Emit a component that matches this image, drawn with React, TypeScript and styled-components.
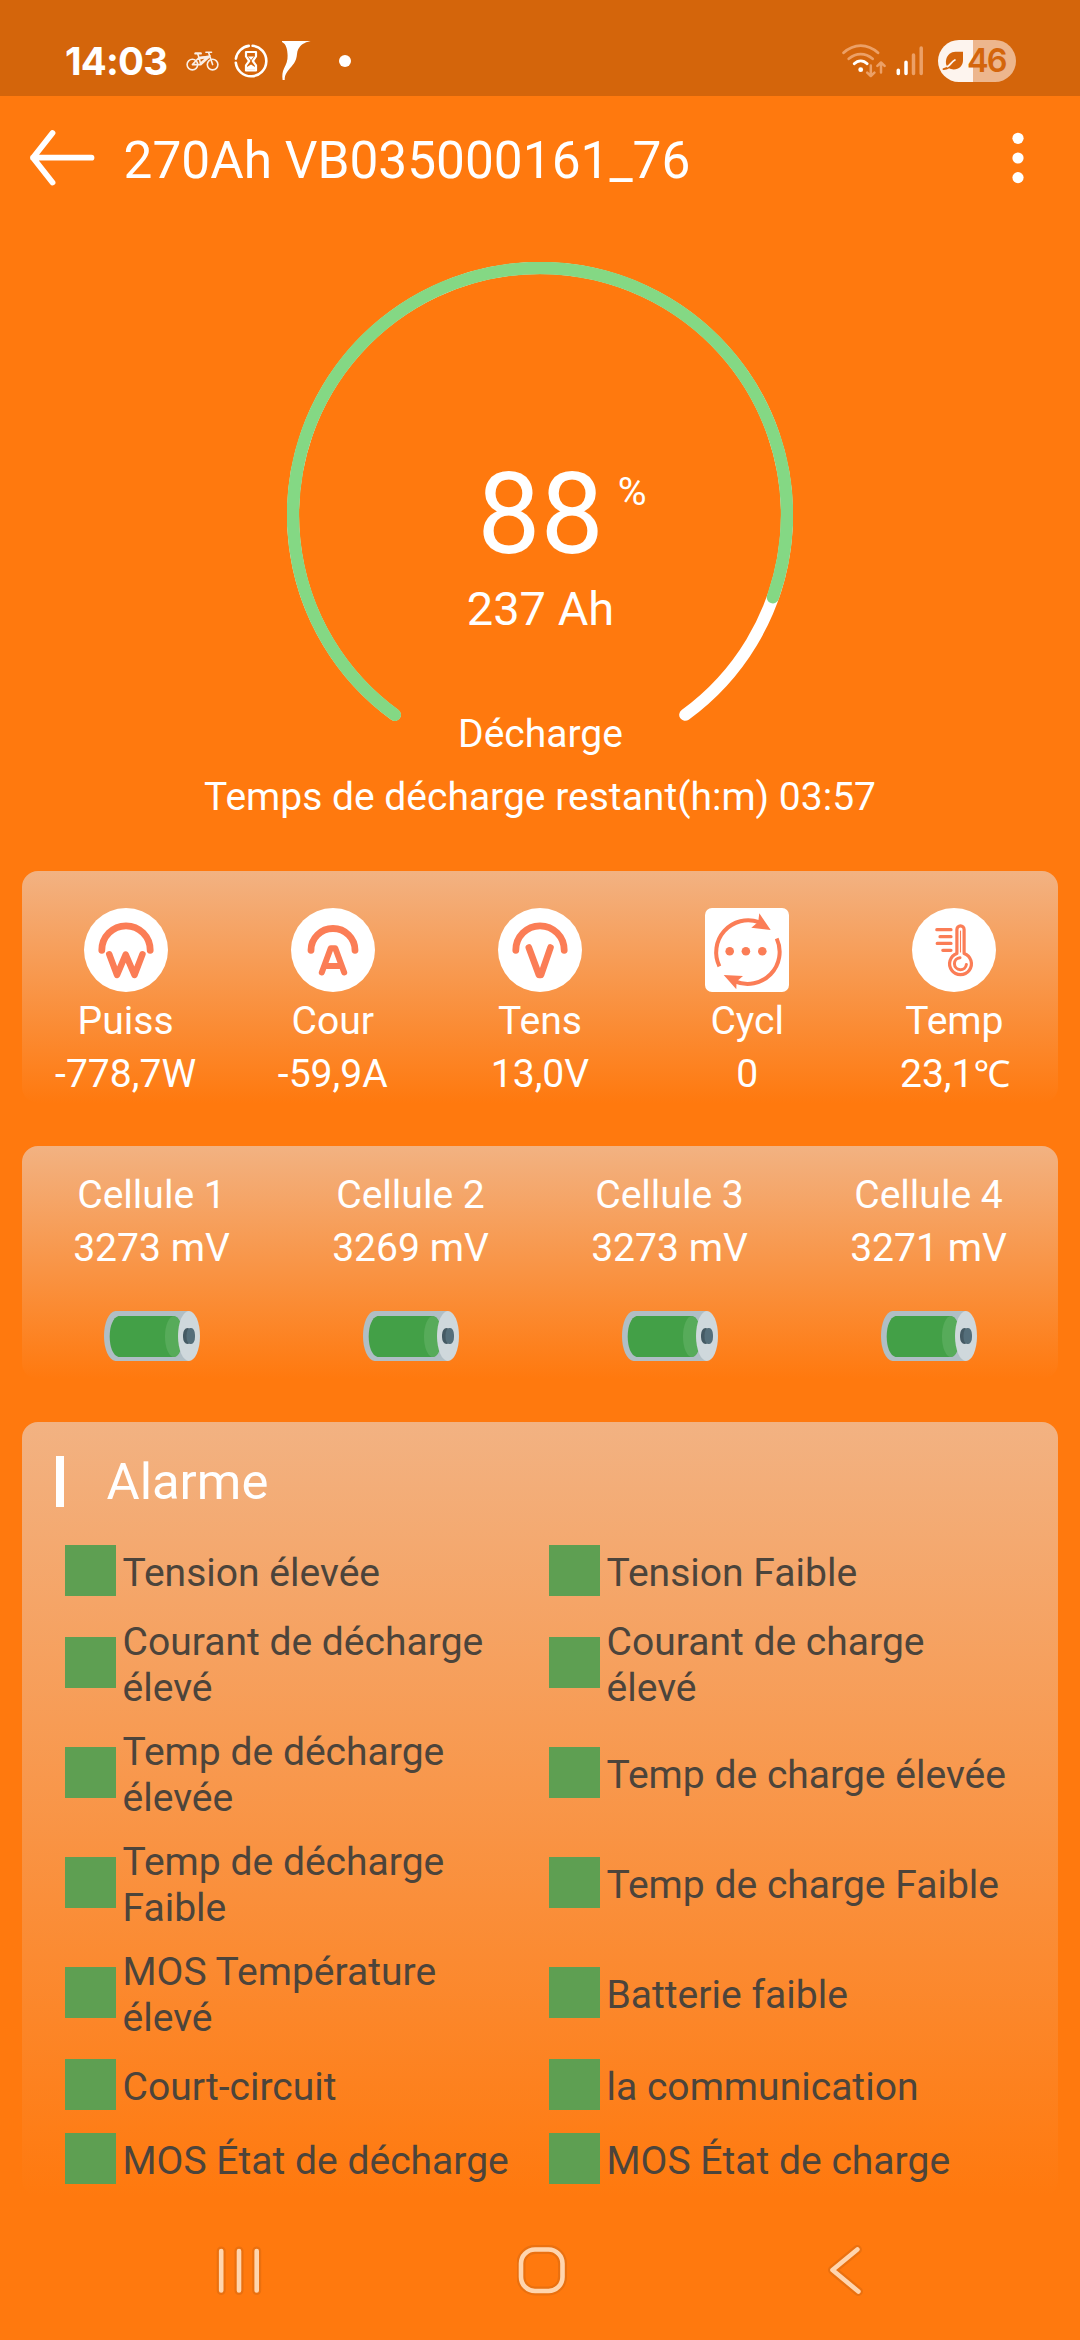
import React from "react";
import styled, { createGlobalStyle } from "styled-components";

const ORANGE = "#ff790e";
const CORAL = "#fb7d56";
const STATUS = "#d4650b";

const GlobalStyle = createGlobalStyle`
  * { box-sizing: border-box; }
  body {
    margin: 0;
    background: ${ORANGE};
    font-family: Roboto, "Noto Sans", sans-serif;
    color: #fff;
  }
  svg { display: block; flex: none; }
`;

const Screen = styled.main`
  width: 1080px;
  height: 2340px;
  display: flex;
  flex-direction: column;
  background: ${ORANGE};
  overflow: hidden;
`;

const StatusBar = styled.header`
  height: 96px;
  padding: 26px 64px 0 65px;
  display: flex;
  align-items: center;
  justify-content: space-between;
  background: ${STATUS};
`;

const StatusGroup = styled.div`
  display: flex;
  align-items: center;
`;

const Clock = styled.span`
  width: 121px;
  font: 700 38.5px/46px Inter, sans-serif;
  letter-spacing: -0.8px;
  white-space: nowrap;
`;

const BatteryPill = styled.div`
  width: 78px;
  height: 42px;
  margin-left: 14px;
  padding-left: 4px;
  border-radius: 21px;
  display: flex;
  align-items: center;
  background: linear-gradient(to right, #fdf4ee 35px, #edb68d 35px);
`;

const BatteryLevel = styled.span`
  margin-left: 3px;
  font: 600 32.5px/42px Inter, sans-serif;
  letter-spacing: -1.8px;
  color: ${STATUS};
`;

const Toolbar = styled.div`
  height: 124px;
  padding: 0 56px 0 28px;
  display: flex;
  align-items: center;
`;

const Title = styled.h1`
  flex: 1;
  margin: 0;
  padding: 5px 0 0 26.5px;
  font-size: 51.4px;
  font-weight: 400;
  line-height: 60px;
`;

const Gauge = styled.section`
  margin-top: 42px;
  height: 506px;
  display: grid;
  grid-template-columns: 506px;
  justify-content: center;
  & > * { grid-area: 1 / 1; }
`;

const Readout = styled.div`
  padding: 196.5px 0 0 1px;
  display: flex;
  flex-direction: column;
  align-items: center;
`;

const Percent = styled.div`
  position: relative;
  font-size: 112.5px;
  line-height: 112px;
`;

const PercentSign = styled.span`
  position: absolute;
  left: 100%;
  top: 10px;
  margin-left: 14px;
  font-size: 39.4px;
  line-height: 46px;
`;

const Capacity = styled.div`
  margin-top: 10px;
  font-size: 47px;
  line-height: 56px;
`;

const Mode = styled.div`
  margin-top: 74px;
  font-size: 39px;
  line-height: 46px;
`;

const Remaining = styled.p`
  margin: 5.5px 0 0;
  font-size: 39px;
  line-height: 46px;
  text-align: center;
`;

const Card = styled.section<{ $height: number; $top: number; $pad: number }>`
  height: ${(p) => p.$height}px;
  margin: ${(p) => p.$top}px 22px 0;
  padding-top: ${(p) => p.$pad}px;
  border-radius: 16px;
  background: linear-gradient(to bottom, #f2b282, ${ORANGE});
`;

const Columns = styled.div<{ $count: number }>`
  display: grid;
  grid-template-columns: repeat(${(p) => p.$count}, 1fr);
`;

const Column = styled.div`
  display: flex;
  flex-direction: column;
  align-items: center;
`;

const Label = styled.span`
  font-size: 39.1px;
  line-height: 53px;
  white-space: nowrap;
`;

const Degree = styled.span`
  font-size: 37px;
  letter-spacing: -1.5px;
`;

const IconBadge = styled.div<{ $square?: boolean }>`
  width: 84px;
  height: 84px;
  margin-bottom: 3.5px;
  border-radius: ${(p) => (p.$square ? "7px" : "50%")};
  background: #fff;
`;

const CellBattery = styled.div`
  margin-top: 36px;
  padding-left: 1px;
`;

const SectionTitle = styled.h2`
  margin: 0 0 26.5px 34px;
  height: 51px;
  display: flex;
  align-items: center;
  gap: 42.5px;
  font-size: 50.8px;
  font-weight: 400;
  line-height: 51px;
  &::before {
    content: "";
    width: 8px;
    height: 51px;
    background: #fff;
  }
`;

const AlarmGrid = styled.div`
  padding-left: 43px;
  display: grid;
  grid-template-columns: 484px 484px;
`;

const Alarm = styled.div<{ $tall: boolean }>`
  height: ${(p) => (p.$tall ? 110 : 74)}px;
  display: flex;
  align-items: center;
`;

const Lamp = styled.span`
  width: 51px;
  height: 51px;
  flex: none;
  background: #5e9f52;
`;

const AlarmText = styled.span`
  width: 402px;
  padding-top: 4px;
  margin-left: 6.5px;
  font-size: 39.05px;
  line-height: 46px;
  color: #4c443b;
`;

const NavBar = styled.nav`
  margin-top: 43px;
  height: 60px;
  padding: 0 216px 0 213px;
  display: flex;
  align-items: center;
  justify-content: space-between;
`;

const BikeIcon = () => (
  <svg width="34" height="22" viewBox="0 0 34 22" fill="none" stroke="#fff" strokeWidth="1.6" strokeLinecap="round" strokeLinejoin="round" opacity="0.9">
    <circle cx="6.4" cy="14.6" r="5.3" />
    <circle cx="26.6" cy="14.6" r="5.3" />
    <path d="M6.4 14.6 13 7.5M6.4 14.6h8.4L24 5.6M13 7.5l1.8 7.1M13 7.5l11-1M22.5 2.2l4.1 12.4M22.5 2.2h-2.6M22.5 2.2h3M11.8 4l1.2 3.5" />
    <path d="M9.5 3.4h5.2" strokeWidth="2.4" />
    <path d="M13.4 8.2 22.6 6.8 15.6 13" strokeWidth="2.6" />
  </svg>
);

const HourglassIcon = () => (
  <svg width="34" height="36" viewBox="0 0 34 36" fill="none" stroke="#fff" strokeWidth="2.6">
    <path d="M18.6 2.8a15.3 15.3 0 1 1-16.8 16.9M1.9 15.6A15.3 15.3 0 0 1 14.8 2.9" strokeLinecap="round" />
    <path d="M12 9h10v4.400L18.800 18l3.200 4.400v5H12v-5l3.200-4.400L12 13.400z" strokeLinejoin="round" strokeWidth="2.2" />
    <path d="M13 26.500v-2.500l4-2.400 4 2.400v2.500zM14 13.500h6l-3 3.500z" fill="#fff" stroke="none" />
  </svg>
);

const SwooshIcon = () => (
  <svg width="29" height="40" viewBox="0 0 29 40">
    <path d="M0 0h28.600c-6.800 1.600-9.800 3.800-12.400 8.200-1.500 2.800-.9 6.300-2.200 10C12 24 7.500 27 4.200 32.400c-1.200 2-1.500 3.800-1.500 6.600H.6c-.6-4.600-.2-8.500 1.400-11.600C4 23.400 5.900 19.500 5.600 14.400 5.400 8.500 4.200 2.900 0 1z" fill="#fff" />
  </svg>
);

const WifiIcon = () => (
  <svg width="44" height="36" viewBox="0 0 44 36" fill="none" stroke="#eca066" strokeWidth="2.8" strokeLinecap="round" strokeLinejoin="round">
    <path d="M1.600 9.800C12 .2 25.400 .2 36 9.800M6.800 15.800C14.200 9.600 23.200 9.600 30.600 15.800" />
    <path d="M12.200 20.800c3.800-4 9.200-4 13 0" stroke="#fff" />
    <circle cx="18.700" cy="26.700" r="2.400" fill="#fff" stroke="none" />
    <path d="M28.800 22.500v10M25.200 29.600l3.600 3.400 3.600-3.400M39 29.500v-9.600M35.400 22.900l3.600-3.400 3.600 3.400" strokeWidth="2.500" />
  </svg>
);

const SignalIcon = () => (
  <svg width="28" height="30" viewBox="0 0 28 30" strokeWidth="3.500" strokeLinecap="round">
    <path d="M2.300 24.300v3.200M10 16.200v11.300" stroke="#fff" />
    <path d="M17.500 9v18.500M25.200 2v25.500" stroke="#eca066" />
  </svg>
);

const LeafIcon = () => (
  <svg width="22" height="20" viewBox="0 0 22 20">
    <path d="M21 .7v8.500c0 5.500-4 9.200-9.300 9.200-2 0-3.400-.5-4.600-1.200C5.500 18.200 3.300 19 1.400 18.900c-1.100-.1-1.100-1.500-.1-1.700 1.500-.2 2.800-.8 3.900-1.600C3.800 13.500 3.600 11 4.200 8.400 5.400 3.600 9 .9 13.500.7z" fill={STATUS} />
    <path d="M5.400 15.600C8.300 14.500 9.300 10.600 12.900 9" fill="none" stroke="#fdf4ee" strokeWidth="1.800" strokeLinecap="round" />
  </svg>
);

const BackArrow = () => (
  <svg width="69" height="60" viewBox="0 0 69 60" fill="none" stroke="#fff" strokeWidth="5.800" strokeLinecap="round" strokeLinejoin="round">
    <path d="M63.500 29.700H5M24.500 5 5 29.700 24.500 54.500" />
  </svg>
);

const MoreIcon = () => (
  <svg width="12" height="54" viewBox="0 0 12 54" fill="#fff">
    <circle cx="6" cy="7.300" r="5.600" />
    <circle cx="6" cy="27" r="5.600" />
    <circle cx="6" cy="46.600" r="5.600" />
  </svg>
);

const RADIUS = 247;
const SWEEP = 288;
const START = 126;

const polar = (deg: number) => {
  const a = (deg * Math.PI) / 180;
  return `${253 + RADIUS * Math.cos(a)} ${253 + RADIUS * Math.sin(a)}`;
};

const arc = (from: number, to: number) =>
  `M${polar(from)}A${RADIUS} ${RADIUS} 0 ${to - from > 180 ? 1 : 0} 1 ${polar(to)}`;

const GaugeArc = ({ value }: { value: number }) => (
  <svg width="506" height="506" viewBox="0 0 506 506" fill="none" strokeWidth="12" strokeLinecap="round">
    <path d={arc(START, START + SWEEP)} stroke="#fff" />
    <path d={arc(START, START + (SWEEP * value) / 100)} stroke="#84d884" strokeWidth="12.400" />
  </svg>
);

const Glyph = ({ children }: { children: React.ReactNode }) => (
  <svg width="84" height="84" viewBox="0 0 84 84" fill="none" stroke={CORAL} strokeLinecap="round" strokeLinejoin="round">
    {children}
  </svg>
);

const PowerIcon = () => (
  <Glyph>
    <path d="M17.800 42.300a24.200 24.500 0 0 1 48.400 0" strokeWidth="6.800" />
    <path d="M25.200 46.200 33 67l8.700-20.500L50.500 67l8-20.800" strokeWidth="6.400" />
  </Glyph>
);

const CurrentIcon = () => (
  <Glyph>
    <path d="M20 42.300a22 21.800 0 0 1 44 0" strokeWidth="6.800" />
    <path d="M30.800 64.500 39.700 40.200h4.600L53.200 64.500M34 58h16" strokeWidth="6" />
  </Glyph>
);

const VoltageIcon = () => (
  <Glyph>
    <path d="M17.800 42.300a24.200 24.500 0 0 1 48.400 0" strokeWidth="6.800" />
    <path d="M30.800 39.500 41 67h2l9.500-27.500" strokeWidth="6.600" />
  </Glyph>
);

const CycleIcon = () => (
  <Glyph>
    <g strokeWidth="4" strokeLinecap="butt">
      <path d="M14.400 58.300A32 32 0 0 1 54 14.200" />
      <path d="M71.700 30.500A32 32 0 0 1 30 73.300" />
    </g>
    <g fill={CORAL} stroke="none">
      <path d="M65.700 22 54.300 5.300 53.200 14 46.300 19.700zM18.700 67 31.300 81.300 31.600 73.500 38 68z" />
      <circle cx="24.700" cy="43.300" r="4.300" />
      <circle cx="40.900" cy="43.300" r="4.300" />
      <circle cx="57.300" cy="43.300" r="4.300" />
    </g>
  </Glyph>
);

const ThermometerIcon = () => (
  <Glyph>
    <g strokeWidth="3.200">
      <path d="M24.800 21.700H39M28 28.700H39M25.200 35.400H39M30.800 42.300H39" />
      <path d="M44.900 45.500V21.400a3.600 3.600 0 0 1 7.200 0V45.500a10.900 10.900 0 1 1-7.200 0z" />
      <path d="M48 49.700a6 6 0 1 0 6.400 6.700" strokeWidth="3" />
    </g>
    <path d="M48.500 23v21" strokeWidth="1.100" />
  </Glyph>
);

const BatteryIcon = () => (
  <svg width="97" height="50" viewBox="0 0 97 50">
    <path d="M11.500 0H85v50H11.500C4.500 49 0 38 0 25S4.500 1 11.500 0z" fill="#b0bec5" />
    <path d="M14.500 5H70c5 1.500 8.500 10 8.500 20.500S75 44.500 70 46H14.500C9 44.500 5.700 36 5.700 25.500S9 6.500 14.500 5z" fill="#43a047" />
    <ellipse cx="70" cy="25.500" rx="9" ry="20.500" fill="#57ab5a" />
    <ellipse cx="85" cy="25" rx="11" ry="25" fill="#cfd8dc" />
    <rect x="79" y="17" width="9" height="16" rx="4.500" ry="7" fill="#455a64" />
    <rect x="82.500" y="17" width="8.500" height="16" rx="3.800" ry="7" fill="#546e7a" />
  </svg>
);

const NavGlyph = ({ width, children }: { width: number; children: React.ReactNode }) => (
  <svg width={width} height="60" viewBox={`0 0 ${width} 60`} fill="none" strokeLinecap="round" strokeLinejoin="round">
    <g stroke="#ea700f" strokeWidth="9">{children}</g>
    <g stroke="#ffd5ae" strokeWidth="4.600">{children}</g>
  </svg>
);

const metrics = [
  { name: "Puiss", value: "-778,7W", icon: <PowerIcon /> },
  { name: "Cour", value: "-59,9A", icon: <CurrentIcon /> },
  { name: "Tens", value: "13,0V", icon: <VoltageIcon /> },
  { name: "Cycl", value: "0", icon: <CycleIcon />, square: true },
  { name: "Temp", value: <>23,1<Degree>℃</Degree></>, icon: <ThermometerIcon /> },
];

const cells = [3273, 3269, 3273, 3271];

const alarms: { tall: boolean; items: [string, string] }[] = [
  { tall: false, items: ["Tension élevée", "Tension Faible"] },
  { tall: true, items: ["Courant de décharge élevé", "Courant de charge élevé"] },
  { tall: true, items: ["Temp de décharge élevée", "Temp de charge élevée"] },
  { tall: true, items: ["Temp de décharge Faible", "Temp de charge Faible"] },
  { tall: true, items: ["MOS Température élevé", "Batterie faible"] },
  { tall: false, items: ["Court-circuit", "la communication"] },
  { tall: false, items: ["MOS État de décharge", "MOS État de charge"] },
];

const StatusIcons = styled(StatusGroup)`
  gap: 14px;
`;

const NotificationDot = styled.i`
  width: 12px;
  height: 12px;
  margin-left: 14px;
  border-radius: 50%;
  background: #fff;
`;

const RadioIcons = styled(StatusGroup)`
  gap: 10px;
`;

export default function App() {
  return (
    <Screen>
      <GlobalStyle />
      <StatusBar>
        <StatusGroup>
          <Clock>14:03</Clock>
          <StatusIcons>
            <BikeIcon />
            <HourglassIcon />
            <SwooshIcon />
            <NotificationDot />
          </StatusIcons>
        </StatusGroup>
        <StatusGroup>
          <RadioIcons>
            <WifiIcon />
            <SignalIcon />
          </RadioIcons>
          <BatteryPill>
            <LeafIcon />
            <BatteryLevel>46</BatteryLevel>
          </BatteryPill>
        </StatusGroup>
      </StatusBar>

      <Toolbar>
        <BackArrow />
        <Title>270Ah VB035000161_76</Title>
        <MoreIcon />
      </Toolbar>

      <Gauge>
        <GaugeArc value={88} />
        <Readout>
          <Percent>
            88<PercentSign>%</PercentSign>
          </Percent>
          <Capacity>237 Ah</Capacity>
          <Mode>Décharge</Mode>
        </Readout>
      </Gauge>
      <Remaining>Temps de décharge restant(h:m) 03:57</Remaining>

      <Card $height={232} $top={51.5} $pad={36.5}>
        <Columns $count={5}>
          {metrics.map((m) => (
            <Column key={m.name}>
              <IconBadge $square={m.square}>{m.icon}</IconBadge>
              <Label>{m.name}</Label>
              <Label>{m.value}</Label>
            </Column>
          ))}
        </Columns>
      </Card>

      <Card $height={233} $top={43} $pad={23}>
        <Columns $count={4}>
          {cells.map((mv, i) => (
            <Column key={i}>
              <Label>Cellule {i + 1}</Label>
              <Label>{mv} mV</Label>
              <CellBattery>
                <BatteryIcon />
              </CellBattery>
            </Column>
          ))}
        </Columns>
      </Card>

      <Card $height={774} $top={43} $pad={34}>
        <SectionTitle>Alarme</SectionTitle>
        <AlarmGrid>
          {alarms.flatMap(({ tall, items }) =>
            items.map((text) => (
              <Alarm key={text} $tall={tall}>
                <Lamp />
                <AlarmText>{text}</AlarmText>
              </Alarm>
            ))
          )}
        </AlarmGrid>
      </Card>

      <NavBar>
        <NavGlyph width={52}>
          <path d="M8.200 12v39.500M26 12v39.500M43.700 12v39.500" />
        </NavGlyph>
        <NavGlyph width={56}>
          <rect x="4" y="10.500" width="41.500" height="41.500" rx="14" />
        </NavGlyph>
        <NavGlyph width={40}>
          <path d="M33.400 10.500 8.500 31 34.400 52.500" />
        </NavGlyph>
      </NavBar>
    </Screen>
  );
}
